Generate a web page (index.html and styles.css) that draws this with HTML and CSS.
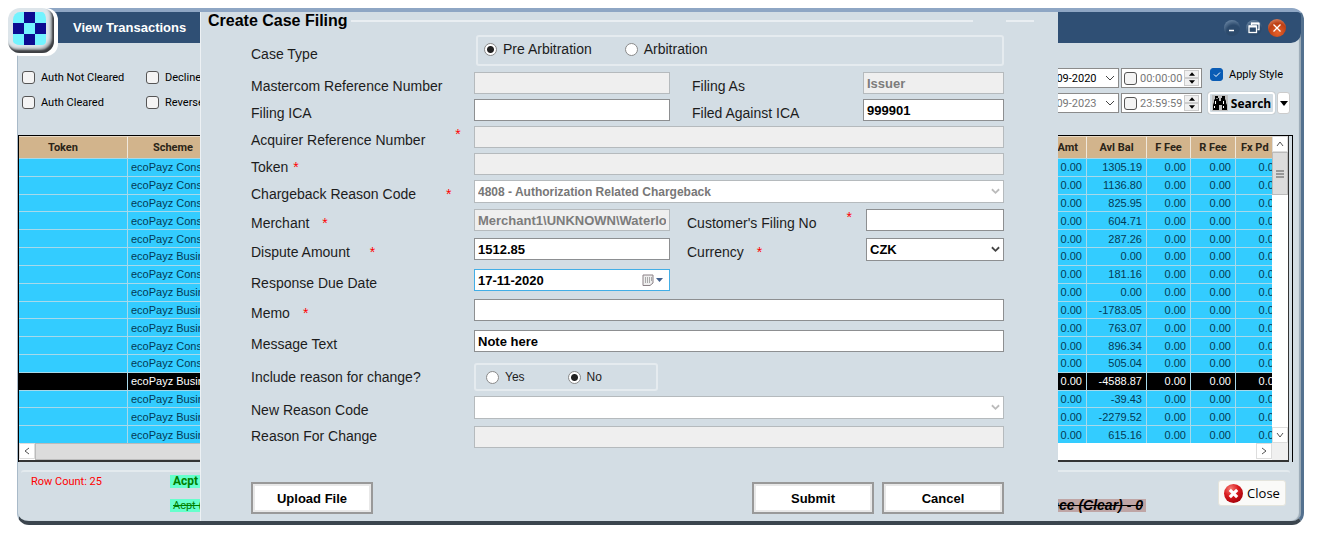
FILE: index.html
```html
<!DOCTYPE html>
<html lang="en">
<head>
<meta charset="utf-8">
<title>View Transactions</title>
<link rel="stylesheet" href="styles.css">
</head>
<body>
<main class="window">
  <header class="titlebar">
    <h1 class="title">View Transactions</h1>
    <div class="win-buttons">
      <button class="orb" aria-label="Minimize"><svg viewBox="0 0 16 16"><path d="M5 10.5h5" stroke="#fff" stroke-width="1.5"/></svg></button>
      <button class="orb" aria-label="Restore"><svg viewBox="0 0 16 16" fill="none" stroke="#fff"><path d="M5.5 5V3.500h7.500v6h-1.500" stroke-width="1.300"/><path d="M5 3.500h8" stroke-width="2"/><rect x="3" y="6" width="7.500" height="6.500" stroke-width="1.300"/><path d="M3 6.500h7.500" stroke-width="2"/></svg></button>
      <button class="orb orb-close" aria-label="Close window"><svg viewBox="0 0 16 16"><path d="M4.500 4.500l7 7M11.500 4.500l-7 7" stroke="#fff" stroke-width="1.300"/></svg></button>
    </div>
  </header>
  <div class="app-icon">
    <svg viewBox="0 0 3 3" shape-rendering="crispEdges"><path fill="#72f3ff" d="M0 0h3v3H0z"/><path fill="#0b0b91" d="M1 0h1v1H1zM0 1h1v1H0zM2 1h1v1H2zM1 2h1v1H1z"/></svg>
  </div>

  <section class="filters">
    <div class="checks">
      <label class="check"><input type="checkbox">Auth Not Cleared</label>
      <label class="check"><input type="checkbox">Declined</label>
      <label class="check"><input type="checkbox">Auth Cleared</label>
      <label class="check"><input type="checkbox">Reversed</label>
    </div>
    <div class="ranges">
      <div class="range">
        <select class="date" aria-label="From date"><option>01-09-2020</option></select>
        <div class="time"><input type="checkbox" aria-label="Use from time"><input class="time-text" aria-label="From time" value="00:00:00"><span class="spin"><button aria-label="Up"><svg viewBox="0 0 7 4"><path d="M0 4h7L3.500 0z"/></svg></button><button aria-label="Down"><svg viewBox="0 0 7 4"><path d="M0 0h7L3.500 4z"/></svg></button></span></div>
      </div>
      <div class="range">
        <select class="date date-off" aria-label="To date"><option>01-09-2023</option></select>
        <div class="time"><input type="checkbox" aria-label="Use to time"><input class="time-text" aria-label="To time" value="23:59:59"><span class="spin"><button aria-label="Up"><svg viewBox="0 0 7 4"><path d="M0 4h7L3.500 0z"/></svg></button><button aria-label="Down"><svg viewBox="0 0 7 4"><path d="M0 0h7L3.500 4z"/></svg></button></span></div>
      </div>
    </div>
    <div class="actions">
      <label class="check"><input type="checkbox" checked>Apply Style</label>
      <div class="search-row">
        <button class="search"><svg viewBox="0 0 16 16"><path d="M0 0h16v16H0z" fill="#c0c0c0"/><path d="M3 1h3v2h1v3h2V3h1V1h3v3l1 2v2l1 2v5h-5v-5H7v5H1v-5l1-3V5l1-1z" fill="#000"/><path d="M3.500 6v3M11.500 6v3M2.500 11v2M11.500 11v2M5 3v1" stroke="#fff"/></svg>Search</button>
        <button class="search-more" aria-label="More search options"><svg viewBox="0 0 8 5"><path d="M0 0h8L4 5z"/></svg></button>
      </div>
    </div>
  </section>

  <section class="grid-frame">
    <div class="grid-view">
      <div class="table-clip">
      <table class="grid">
        <colgroup><col class="c-token"><col class="c-scheme"><col><col class="c-bal"><col class="c-fee"><col class="c-rfee"><col class="c-fx"></colgroup>
        <thead><tr><th>Token</th><th class="scheme">Scheme</th><th class="amt">Amt</th><th>Avl Bal</th><th>F Fee</th><th>R Fee</th><th class="fx">Fx Pd</th></tr></thead>
        <tbody>
          <tr><td></td><td>ecoPayz Consumer</td><td>0.00</td><td>1305.19</td><td>0.00</td><td>0.00</td><td>0.00</td></tr>
          <tr><td></td><td>ecoPayz Consumer</td><td>0.00</td><td>1136.80</td><td>0.00</td><td>0.00</td><td>0.00</td></tr>
          <tr><td></td><td>ecoPayz Consumer</td><td>0.00</td><td>825.95</td><td>0.00</td><td>0.00</td><td>0.00</td></tr>
          <tr><td></td><td>ecoPayz Consumer</td><td>0.00</td><td>604.71</td><td>0.00</td><td>0.00</td><td>0.00</td></tr>
          <tr><td></td><td>ecoPayz Consumer</td><td>0.00</td><td>287.26</td><td>0.00</td><td>0.00</td><td>0.00</td></tr>
          <tr><td></td><td>ecoPayz Business</td><td>0.00</td><td>0.00</td><td>0.00</td><td>0.00</td><td>0.00</td></tr>
          <tr><td></td><td>ecoPayz Consumer</td><td>0.00</td><td>181.16</td><td>0.00</td><td>0.00</td><td>0.00</td></tr>
          <tr><td></td><td>ecoPayz Business</td><td>0.00</td><td>0.00</td><td>0.00</td><td>0.00</td><td>0.00</td></tr>
          <tr><td></td><td>ecoPayz Business</td><td>0.00</td><td>-1783.05</td><td>0.00</td><td>0.00</td><td>0.00</td></tr>
          <tr><td></td><td>ecoPayz Business</td><td>0.00</td><td>763.07</td><td>0.00</td><td>0.00</td><td>0.00</td></tr>
          <tr><td></td><td>ecoPayz Consumer</td><td>0.00</td><td>896.34</td><td>0.00</td><td>0.00</td><td>0.00</td></tr>
          <tr><td></td><td>ecoPayz Consumer</td><td>0.00</td><td>505.04</td><td>0.00</td><td>0.00</td><td>0.00</td></tr>
          <tr class="selected"><td></td><td>ecoPayz Business</td><td>0.00</td><td>-4588.87</td><td>0.00</td><td>0.00</td><td>0.00</td></tr>
          <tr><td></td><td>ecoPayz Business</td><td>0.00</td><td>-39.43</td><td>0.00</td><td>0.00</td><td>0.00</td></tr>
          <tr><td></td><td>ecoPayz Business</td><td>0.00</td><td>-2279.52</td><td>0.00</td><td>0.00</td><td>0.00</td></tr>
          <tr><td></td><td>ecoPayz Business</td><td>0.00</td><td>615.16</td><td>0.00</td><td>0.00</td><td>0.00</td></tr>
        </tbody>
      </table>
      </div>
      <div class="vscroll">
        <button aria-label="Scroll up"><svg viewBox="0 0 8 8"><path d="M1 6l3-4 3 4"/></svg></button>
        <div class="vthumb"><svg viewBox="0 0 8 8"><path d="M0 1h8M0 4h8M0 7h8"/></svg></div>
        <button class="end" aria-label="Scroll down"><svg viewBox="0 0 8 8"><path d="M1 2l3 4 3-4"/></svg></button>
      </div>
      <div class="hscroll">
        <button aria-label="Scroll left"><svg viewBox="0 0 8 8"><path d="M6 1L2 4l4 3"/></svg></button>
        <div class="hthumb"></div>
        <button class="end" aria-label="Scroll right"><svg viewBox="0 0 8 8"><path d="M2 1l4 3-4 3"/></svg></button>
      </div>
      <div class="corner"></div>
    </div>
  </section>

  <footer class="footer">
    <div class="row-count">Row Count: 25</div>
    <div class="legend"><span class="tag tag-ok">Acpt - 25</span><span class="tag tag-clear">Acpt (Clear) - 0</span></div>
    <div class="legend legend-end"><span class="tag tag-bal">Balance (Clear) - 0</span></div>
    <button class="close"><svg viewBox="0 0 18 18"><defs><radialGradient id="red" cx=".35" cy=".25" r=".8"><stop offset="0" stop-color="#f67b73"/><stop offset=".5" stop-color="#d91a1e"/><stop offset="1" stop-color="#a3000a"/></radialGradient></defs><circle cx="9" cy="9" r="9" fill="url(#red)"/><path d="M5.500 5.500l7 7M12.500 5.500l-7 7" stroke="#fff" stroke-width="3"/></svg>Close</button>
  </footer>

  <form class="dialog" aria-labelledby="dialog-title">
    <div class="dialog-head"><h2 id="dialog-title">Create Case Filing</h2><i class="rule"></i><i class="rule-short"></i></div>
    <div class="fields">
      <span class="label label-low">Case Type</span>
      <div class="radio-box span3">
        <label><input type="radio" name="type" checked>Pre Arbitration</label>
        <label><input type="radio" name="type">Arbitration</label>
      </div>

      <label class="label" for="ref">Mastercom Reference Number</label>
      <input id="ref" disabled>
      <label class="label second" for="as">Filing As</label>
      <input id="as" value="Issuer" disabled>

      <label class="label" for="ica">Filing ICA</label>
      <input id="ica">
      <label class="label second" for="against">Filed Against ICA</label>
      <input id="against" value="999901">

      <label class="label" for="acq">Acquirer Reference Number<b class="far high">*</b></label>
      <input id="acq" class="span3" disabled>

      <label class="label" for="token">Token<b class="near">*</b></label>
      <input id="token" class="span3" disabled>

      <label class="label" for="reason">Chargeback Reason Code<b class="far">*</b></label>
      <select id="reason" class="span3" disabled><option>4808 - Authorization Related Chargeback</option></select>

      <label class="label" for="merchant">Merchant<b>*</b></label>
      <input id="merchant" value="Merchant1\UNKNOWN\Waterloo" disabled>
      <label class="label third" for="custno">Customer's Filing No<b class="far high">*</b></label>
      <input id="custno" class="narrow">

      <label class="label" for="amount">Dispute Amount<b class="mid">*</b></label>
      <input id="amount" value="1512.85">
      <label class="label third" for="currency">Currency<b>*</b></label>
      <select id="currency" class="narrow"><option>CZK</option></select>

      <label class="label" for="due">Response Due Date</label>
      <div class="due"><input id="due" value="17-11-2020"><svg viewBox="0 0 22 12"><path d="M1 1h10v8l-3 2.500H1z" fill="#eee" stroke="#8b8186"/><path d="M3.500 3v6M5.500 3v6M7.500 3v6M9.500 3v4" stroke="#aaa"/><path d="M14 4h7l-3.500 4z" fill="#41608f"/></svg></div>

      <label class="label row-start" for="memo">Memo<b>*</b></label>
      <input id="memo" class="span3">

      <label class="label" for="msg">Message Text</label>
      <input id="msg" class="span3" value="Note here">

      <span class="label">Include reason for change?</span>
      <div class="radio-box yesno">
        <label><input type="radio" name="change">Yes</label>
        <label><input type="radio" name="change" checked>No</label>
      </div>

      <label class="label row-start" for="newcode">New Reason Code</label>
      <select id="newcode" class="span3" disabled><option></option></select>

      <label class="label last" for="why">Reason For Change</label>
      <input id="why" class="span3" disabled>
    </div>
    <div class="dialog-buttons">
      <button type="button" class="upload">Upload File</button>
      <button type="button">Submit</button>
      <button type="button">Cancel</button>
    </div>
  </form>
</main>
</body>
</html>
```
FILE: styles.css
```css
* { box-sizing: border-box; }
body { margin: 0; background: #fff; font-family: Roboto, "Liberation Sans", sans-serif; font-size: 11px; color: #000; }
button, input, select { font: inherit; color: inherit; margin: 0; }
button { padding: 0; cursor: default; }
svg { display: block; }

.window { position: relative; margin: 8px 13px 0 17px; background: #d3dde4; border-top: 4px solid #8ea6c4; border-right: 3px solid #54718f; border-bottom: 4px solid #3b454e; border-left: 1px solid #a9bac9; border-radius: 8px 12px 12px 12px; box-shadow: inset -2px 0 1px #9aa9b5; }

.titlebar { display: flex; align-items: center; justify-content: space-between; height: 31px; padding: 0 15px 0 55px; background: #2f4f74; border-radius: 0 4px 10px 0; }
.title { margin: 0; color: #fff; font: bold 13px "Liberation Sans", Arial, sans-serif; }
.win-buttons { display: flex; align-items: center; gap: 6px; }
.orb { width: 16px; height: 16px; border: 0; border-radius: 50%; background: radial-gradient(circle at 60% 75%, #2c4a6c 45%, #86a1bd); }
.orb svg { width: 16px; height: 16px; margin: 0 auto; }
.orb-close { width: 18px; height: 18px; background: radial-gradient(circle at 55% 75%, #e8622a, #bd3f14 55%, #e7a78b); }
.app-icon { position: absolute; left: -10px; top: -4px; width: 50px; height: 48px; padding: 0 4px 3px 0; background: #fff; border-radius: 12px; }
.app-icon svg { width: 46px; height: 45px; padding: 4px 8px 8px 5px; background: #dde5ea; border-radius: 12px; box-shadow: inset -2px -3px 2px #3c3e42, inset -4px -5px 3px #a7adb2; }

.filters { display: flex; height: 92px; padding: 22px 11px 0 4px; }
.check { display: flex; align-items: center; gap: 6px; height: 25px; white-space: nowrap; }
input[type=checkbox] { appearance: none; flex: none; width: 13px; height: 13px; border: 1px solid #555; border-radius: 3px; background: #f4f4f4; }
.check input:checked { border-color: #0a5cb5; background: #0a5cb5 url("data:image/svg+xml,%3Csvg xmlns='http://www.w3.org/2000/svg' viewBox='0 0 11 11'%3E%3Cpath d='M3 5.5l2 2 4-4' fill='none' stroke='white'/%3E%3C/svg%3E"); }
.checks { display: grid; grid-template-columns: 124px 100px; grid-auto-rows: 25px; flex: 1; }
.ranges { display: grid; gap: 5px; align-content: start; padding-top: 3px; }
.range { display: flex; gap: 2px; }
.date { width: 82px; height: 20px; padding: 0 0 0 3px; border: 1px solid #8b8b8b; appearance: none; background: #fff url("data:image/svg+xml,%3Csvg xmlns='http://www.w3.org/2000/svg' viewBox='0 0 10 6'%3E%3Cpath d='M1 1l4 4 4-4' fill='none' stroke='%23444'/%3E%3C/svg%3E") right 3px center / 10px 6px no-repeat; }
.date-off { color: #777; }
.time { display: flex; align-items: center; width: 81px; height: 20px; padding: 1px 2px; border: 1px solid #8b8b8b; background: #fff; color: #777; }
.time-text { flex: 1; min-width: 0; padding: 0 0 0 3px; border: 0; background: none; }
.spin { display: grid; flex: none; width: 15px; height: 16px; }
.spin button { display: grid; place-items: center; height: 8px; border: 1px solid #ccc; background: #f0f0f0; }
.spin svg { width: 6px; height: 4px; }
.actions { margin-left: 8px; }
.actions .check { height: 19px; margin-bottom: 8px; }
.search-row { display: flex; gap: 2px; margin-left: -2px; }
.search { display: flex; align-items: center; justify-content: center; gap: 3px; width: 67px; height: 22px; border: 2px solid #fff; border-radius: 3px; background: #d3dde4; font: bold 12px "Open Sans", sans-serif; box-shadow: 0 0 1px #777; }
.search svg { width: 16px; height: 16px; }
.search-more { display: grid; place-items: center; width: 13px; height: 22px; border: 1px solid #ccc; border-radius: 3px; background: #fff; }
.search-more svg { width: 8px; height: 5px; }

.grid-frame { margin: 0 8px 0 0; border: solid #000; border-width: 1px 1px 0; padding-right: 3px; }
.grid-view { display: grid; grid-template-columns: 1fr 16px; grid-template-rows: 307px 17px; border: solid #333; border-width: 0 1px 2px 0; }
.table-clip { overflow: hidden; }
.grid { width: calc(100% + 12px); height: 307px; border-collapse: separate; border-spacing: 0; table-layout: fixed; font: 11px/12px "Liberation Sans", Arial, sans-serif; color: #043a55; }
.c-token { width: 109px; } .c-scheme { width: 140px; } .c-bal { width: 60px; } .c-fee { width: 44px; } .c-rfee { width: 45px; } .c-fx { width: 48px; }
.grid th { height: 22px; padding: 0; overflow: hidden; white-space: nowrap; font-family: Roboto, sans-serif; background: #d2b48c; color: #2b2418; border-right: 1px solid #f0e8dc; border-top: 1px solid #e8d9c4; }
.grid th:first-child { padding-right: 20px; }
.grid .scheme { padding-right: 49px; }
.grid .amt { text-align: right; padding-right: 8px; }
.grid .fx { text-align: left; padding-left: 5px; }
.grid td { padding: 0 4px; overflow: hidden; white-space: nowrap; text-align: right; background: #33ccff; border: solid #a7d9ea; border-width: 1px 1px 0 0; }
.grid td:nth-child(2) { text-align: left; padding-left: 3px; }
.grid td:last-child, .grid th:last-child { border-right: 0; }
.grid .selected td { background: #000; color: #fff; }
.vscroll { display: flex; flex-direction: column; background: #fff; }
.vscroll button, .hscroll button { display: grid; place-items: center; flex: none; width: 16px; height: 16px; border: 1px solid #ddd; background: #fff; }
.vscroll svg, .hscroll svg { width: 8px; height: 8px; fill: none; stroke: #555; stroke-width: 1; }
.vthumb { display: grid; place-items: center; width: 16px; height: 43px; border: 1px solid #bbb; background: #dcdcdc; }
.vscroll .end { margin-top: auto; }
.hscroll { display: flex; background: #fff; }
.hthumb { width: 60%; border: 1px solid #bbb; background: #dcdcdc; }
.hscroll .end { margin-left: auto; }
.corner { background: #f0f0f0; }

.footer { display: flex; align-items: flex-start; height: 51px; margin: 8px 11px 0 3px; padding: 0 4px 0 10px; border-top: 2px solid #e3eaee; border-radius: 3px; }
.row-count { width: 139px; padding-top: 2px; color: #f00; line-height: 16px; }
.legend { display: grid; gap: 11px; padding-top: 3px; line-height: 13px; justify-items: start; }
.legend-end { flex: 1; padding: 27px 72px 0 0; justify-items: end; }
.tag { padding: 0 3px; background: #66ffcc; color: #008000; white-space: nowrap; }
.tag-ok { font-weight: bold; font-size: 12px; }
.tag-clear { text-decoration: line-through; }
.tag-bal { background: #bfa5a5; color: #000; font: italic bold 14px/13px "Liberation Sans", Arial, sans-serif; text-decoration: line-through; }
.close { display: flex; align-items: center; justify-content: center; gap: 4px; width: 68px; height: 26px; margin-top: 8px; border: 1px solid #e4e4dc; border-radius: 3px; background: #fafaf8; font: 13px "Open Sans", sans-serif; }
.close svg { width: 19px; height: 19px; }

.dialog { position: absolute; top: 0; bottom: 0; left: 182px; right: 243px; padding: 0 54px 0 50px; background: #d3dde4; border-left: 1px solid #edf1f4; font-family: "Liberation Sans", Arial, sans-serif; }
.dialog-head { display: flex; align-items: center; height: 18px; margin: 0 -30px 5px -43px; }
.dialog-head h2 { margin: 0 3px 0 0; font-size: 16px; line-height: 18px; }
.rule { flex: 1; height: 2px; background: #e9eef2; }
.rule-short { width: 28px; height: 2px; margin-left: 33px; background: #e9eef2; }
.fields { display: grid; grid-template-columns: 223px 196px 1fr 141px; grid-template-rows: 37px 27px 27px 27px 27px 29px 29px 31px 30px 31px 33px 33px 30px 21px; align-items: start; }
.label { display: block; font-size: 14px; line-height: 28px; color: #1c1c1c; white-space: nowrap; }
.label-low { padding-top: 5px; }
.last { line-height: 21px; }
.row-start { grid-column: 1; }
.second { padding-left: 22px; }
.third { padding-left: 17px; }
.label b { margin-left: 13px; color: #f00; font-weight: normal; }
.label .near { margin-left: 5px; }
.label .mid { margin-left: 20px; }
.label .far { margin-left: 30px; }
.label .high { vertical-align: 6px; line-height: 1px; }
.span3 { grid-column: span 3; }
.fields > input, .fields > select, .due { width: 100%; height: 22px; padding: 0 3px; border: 1px solid #8d8f91; border-radius: 0; background-color: #fff; font-size: 13px; font-weight: bold; }
.fields > input:disabled { border-color: #b5babd; background: #efefef; color: #7c7c7c; }
.fields > .narrow { width: 138px; justify-self: end; }
.fields > select { height: 23px; appearance: none; opacity: 1; background: #fff url("data:image/svg+xml,%3Csvg xmlns='http://www.w3.org/2000/svg' viewBox='0 0 10 7'%3E%3Cpath d='M1 1l4 4 4-4' fill='none' stroke='%23444' stroke-width='2'/%3E%3C/svg%3E") right 3px center / 9px 7px no-repeat; }
.fields > select:disabled { font-size: 12px; border-color: #b5babd; color: #777; background-image: url("data:image/svg+xml,%3Csvg xmlns='http://www.w3.org/2000/svg' viewBox='0 0 10 7'%3E%3Cpath d='M1 1l4 4 4-4' fill='none' stroke='%23bbb' stroke-width='2'/%3E%3C/svg%3E"); }
.due { display: flex; align-items: center; border-color: #42aee6; }
.due input { flex: 1; min-width: 0; padding: 0; border: 0; background: none; }
.due svg { width: 22px; height: 12px; margin-right: 2px; }
.radio-box { display: flex; gap: 33px; height: 31px; margin-left: 2px; padding: 0 6px; border: 2px solid #e5ebef; border-radius: 3px; font-size: 14px; color: #1c1c1c; }
.radio-box label { display: flex; align-items: center; gap: 6px; height: 24px; }
.radio-box input { appearance: none; width: 13px; height: 13px; margin: 0; border: 1px solid #8a8a8a; border-radius: 50%; background: #fff; }
.radio-box input:checked { background: radial-gradient(circle, #222 3px, #fff 4px); }
.yesno { width: 184px; height: 28px; margin-left: 0; padding-left: 10px; gap: 43px; font-size: 12px; }
.dialog-buttons { display: flex; gap: 8px; margin-top: 35px; }
.dialog-buttons button { width: 122px; height: 32px; border: 2px solid #999; background: #fff; box-shadow: inset 0 0 0 2px #e8e8e8; font-size: 13px; font-weight: bold; }
.dialog-buttons .upload { margin-right: auto; }
```
